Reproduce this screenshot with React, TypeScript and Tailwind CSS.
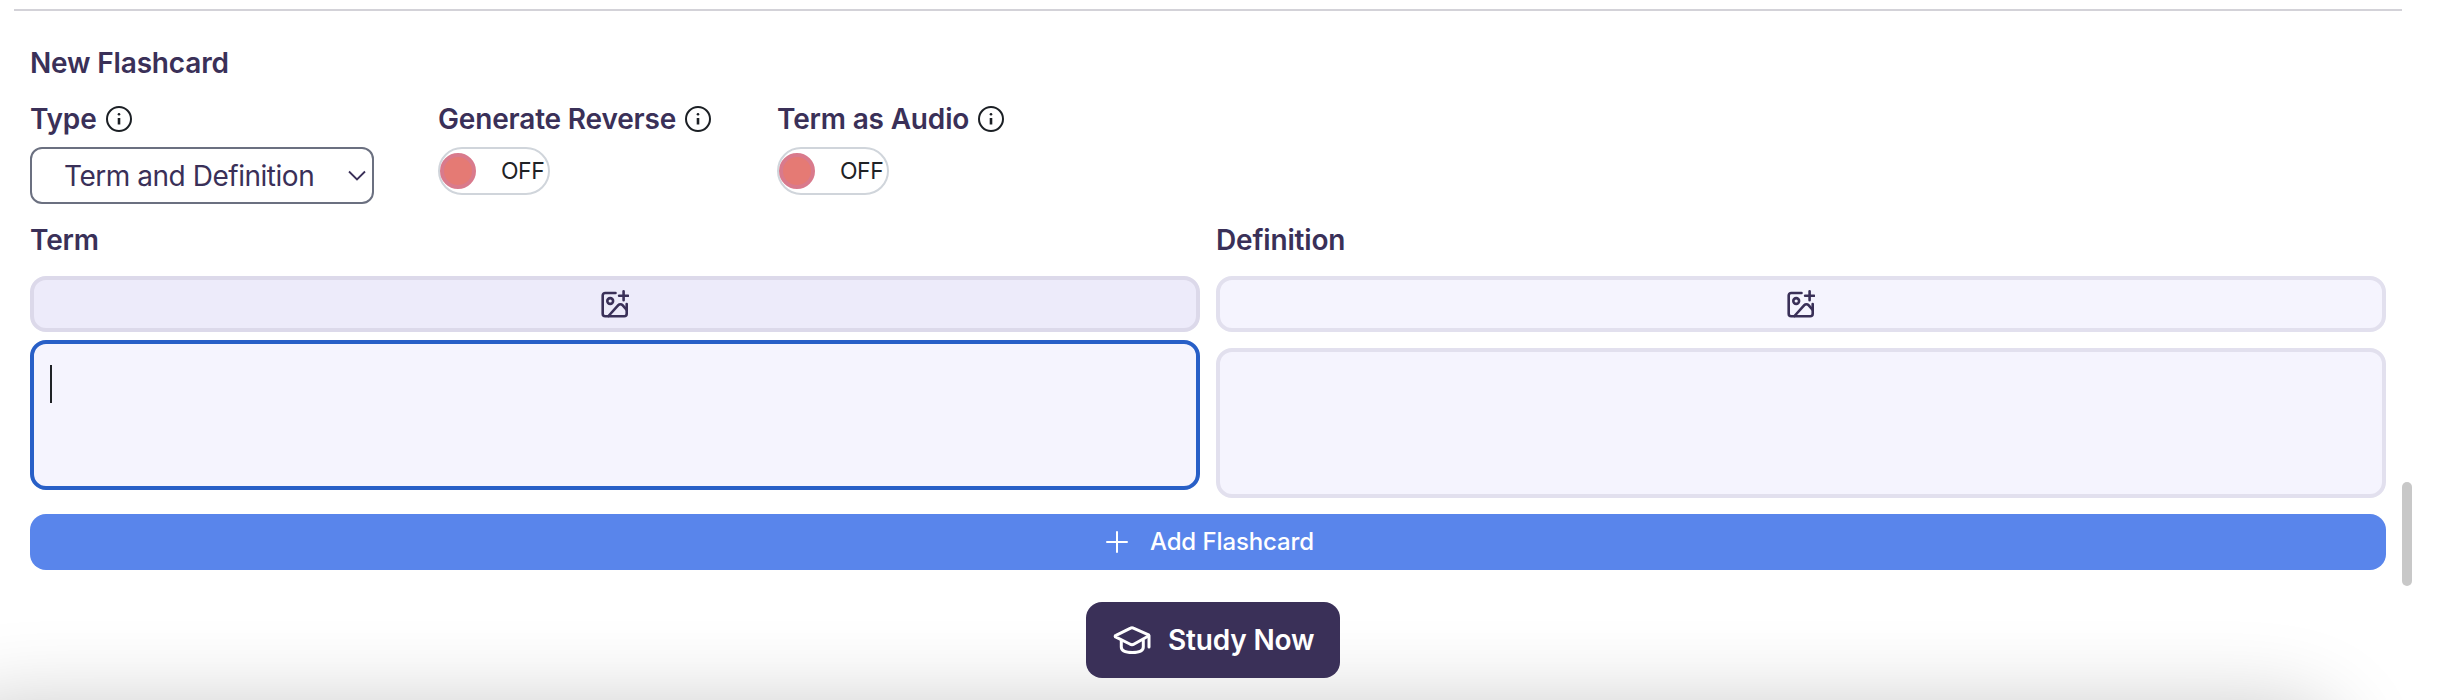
import React from "react";

function InfoIcon() {
  return (
    <svg className="size-[26px] shrink-0" viewBox="0 0 26 26" fill="none" stroke="#1b1f24" strokeLinecap="round">
      <circle cx="13" cy="13" r="12" strokeWidth="2" />
      <path d="M13 12v6.500" strokeWidth="2.6" strokeLinecap="butt" />
      <circle cx="13" cy="8.3" r="1.3" fill="#1b1f24" stroke="none" />
    </svg>
  );
}

function ImageAddIcon() {
  return (
    <svg className="size-7 shrink-0" viewBox="0 0 28 28" fill="none" stroke="#3a3058" strokeWidth="2.6" strokeLinecap="round" strokeLinejoin="round">
      <path d="M14.500 3H4.200A2.500 2.500 0 0 0 1.700 5.500V23.700a2.500 2.500 0 0 0 2.500 2.500H23.200A2.500 2.500 0 0 0 25.700 23.700V14" />
      <circle cx="9.200" cy="11" r="2.900" />
      <path d="M7.500 26 17.300 15.200a2.800 2.800 0 0 1 4.200 0L25.700 19.800" />
      <path d="M22.600 1.300v9M18.100 5.800h9" />
    </svg>
  );
}

function CapIcon() {
  return (
    <svg className="h-[28px] w-[38px] shrink-0" viewBox="0 0 38 28" fill="none" stroke="#fff" strokeWidth="3" strokeLinecap="round" strokeLinejoin="round">
      <path d="M17.600 2.200a3 3 0 0 1 2.800 0L35 8.600a.8.8 0 0 1 0 1.600L21.200 18a4 4 0 0 1-4.400 0L3 11.200a.9.9 0 0 1 0-1.800Z" />
      <path d="M36 10v11M8.300 14.500v6.500q0 5.500 11 5.500t11-5.500v-6.500" />
    </svg>
  );
}

function Label({ text, info }: { text: string; info?: boolean }) {
  return (
    <div className="flex h-[42px] items-center gap-[9px] text-[28px] font-semibold tracking-[-0.17px] whitespace-nowrap">
      <span>{text}</span>
      {info && <InfoIcon />}
    </div>
  );
}

function Toggle({ text }: { text: string }) {
  return (
    <div>
      <Label text={text} info />
      <div className="mt-[7px] flex h-12 w-28 items-center rounded-full border-2 border-[#d0d5db] text-[#1f2226]">
        <div className="size-9 rounded-full border-4 border-[#d97a8c] bg-[#e57a74]" />
        <span className="ml-[25px] text-[23px] leading-9 tracking-[-0.5px]">OFF</span>
      </div>
    </div>
  );
}

export default function App() {
  return (
    <div className="relative h-[700px] w-[2444px] overflow-hidden bg-white font-['Inter',sans-serif] text-[#3a3058]">
      <div className="flex h-full flex-col pr-[58px] pl-[30px] pt-[9px]">
        <div className="-mr-4 -ml-4 h-0.5 shrink-0 bg-[#d3d2d8]" />
        <div className="mt-[31px]">
          <Label text="New Flashcard" />
        </div>
        <div className="mt-3.5 flex h-[106px]">
          <div className="w-[408px]">
            <Label text="Type" info />
            <div className="mt-[7px] flex h-[57px] w-[344px] items-center justify-between rounded-xl border-2 border-[#6b7080] pr-[6px] pl-8">
              <span className="text-[28px] tracking-[-0.47px]">Term and Definition</span>
              <svg className="h-3 w-[18px]" viewBox="0 0 18 12" fill="none" stroke="#3a3058" strokeWidth="1.8">
                <path d="M1 1.500 9 9.500 17 1.500" />
              </svg>
            </div>
          </div>
          <div className="w-[339px]"><Toggle text="Generate Reverse" /></div>
          <Toggle text="Term as Audio" />
        </div>
        <div className="mt-[15px] grid grid-cols-2 gap-x-4">
          <div>
            <Label text="Term" />
            <div className="mt-[15px] flex h-14 items-center justify-center rounded-2xl border-4 border-[#dcd9ea] bg-[#edebfa]"><ImageAddIcon /></div>
            <div className="mt-2 h-[150px] rounded-2xl border-4 border-[#285fc7] bg-[#f5f4fe] pt-[21px] pl-4">
              <div className="h-[38px] w-0.5 bg-[#1f2226]" />
            </div>
          </div>
          <div>
            <Label text="Definition" />
            <div className="mt-[15px] flex h-14 items-center justify-center rounded-2xl border-4 border-[#e2e0ee] bg-[#f5f4fe]"><ImageAddIcon /></div>
            <div className="mt-4 h-[150px] rounded-2xl border-4 border-[#e2e0ee] bg-[#f5f4fe]" />
          </div>
        </div>
        <div className="mt-4 flex h-14 shrink-0 items-center justify-center gap-[22px] rounded-2xl bg-[#5985eb] pl-1 text-white">
          <svg className="size-[22px]" viewBox="0 0 22 22" stroke="#fff" strokeWidth="2" strokeLinecap="round">
            <path d="M11 1v20M1 11h20" />
          </svg>
          <span className="text-[24px] font-medium tracking-[-0.1px]">Add Flashcard</span>
        </div>
      </div>
      <div className="absolute top-[705px] left-[-60px] h-[200px] w-[2400px] rounded-[60px] shadow-[0_0_84px_rgba(0,0,0,0.215)]" />
      <div className="absolute top-[602px] left-[1086px] flex h-[76px] w-[254px] items-center gap-[17px] rounded-2xl bg-[#3a3058] pl-[27px] text-white">
        <CapIcon />
        <span className="text-[28px] font-semibold tracking-[-0.17px] whitespace-nowrap">Study Now</span>
      </div>
      <div className="absolute top-[482px] left-[2402px] h-[104px] w-2.5 rounded-full bg-[#c8c8c8]" />
    </div>
  );
}
